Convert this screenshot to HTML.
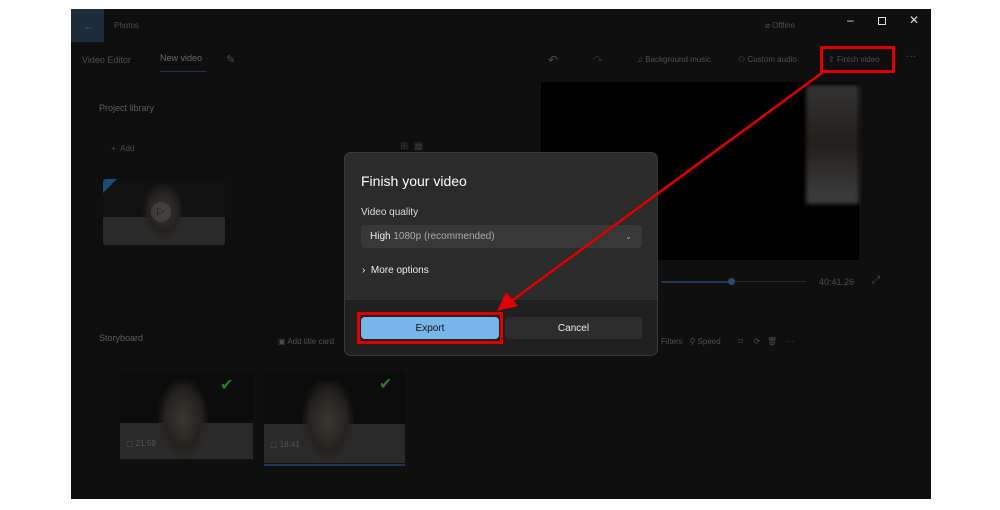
<!DOCTYPE html>
<html><head><meta charset="utf-8"><style>
*{margin:0;padding:0;box-sizing:border-box}
body{width:1000px;height:510px;background:#fff;position:relative;overflow:hidden;font-family:"Liberation Sans",sans-serif}
.win{position:absolute;left:71px;top:9px;width:860px;height:490px;background:#0f0f0f;overflow:hidden}
.a{position:absolute;color:#4e4e4e;font-size:9px;white-space:nowrap}
.dlg{position:absolute;left:344px;top:152px;width:314px;height:204px;background:#2b2b2b;border-radius:7px;overflow:hidden;border:1px solid #3a3a3a}
.face{position:absolute;border-radius:40%;background:radial-gradient(ellipse at center,#3a3632 0%,#26231f 50%,rgba(30,30,30,0) 75%)}
</style></head><body>
<div class="win">
 <div style="position:absolute;left:0;top:0;width:33px;height:33px;background:#1c2c3a"></div>
 <div class="a" style="left:12px;top:10px;font-size:12px;color:#3d5a74">←</div>
 <div class="a" style="left:43px;top:12px;font-size:8px">Photos</div>
 <div class="a" style="left:694px;top:12px;font-size:8px">⌀ Offline</div>
 <div class="a" style="left:776px;top:4px;font-size:12px;color:#ddd">–</div>
 <div style="position:absolute;left:807px;top:8px;width:8px;height:8px;border:1px solid #ddd"></div>
 <div class="a" style="left:838px;top:4px;font-size:12px;color:#ddd">✕</div>
 <div class="a" style="left:11px;top:46px">Video Editor</div>
 <div class="a" style="left:89px;top:44px;color:#6a6a6a">New video</div>
 <div style="position:absolute;left:89px;top:62px;width:47px;height:1px;background:#1d3550"></div>
 <div class="a" style="left:155px;top:44px;font-size:11px">✎</div>
 <div class="a" style="left:477px;top:44px;font-size:12px">↶</div>
 <div class="a" style="left:522px;top:44px;font-size:12px;color:#2a2a2a">↷</div>
 <div class="a" style="left:566px;top:46px;font-size:8px">♫ Background music</div>
 <div class="a" style="left:667px;top:46px;font-size:8px">⚇ Custom audio</div>
 <div class="a" style="left:757px;top:46px;font-size:8px">⇪ Finish video</div>
 <div class="a" style="left:835px;top:42px;font-size:10px">···</div>
 <div class="a" style="left:28px;top:94px;font-size:9px;color:#5e5e5e">Project library</div>
 <div class="a" style="left:40px;top:135px;font-size:8px">+ &nbsp;Add</div>
 <div class="a" style="left:329px;top:132px;font-size:10px;color:#3a3a3a">⊞ &nbsp;▦</div>
 <div style="position:absolute;left:32px;top:170px;width:122px;height:66px;background:#111;overflow:hidden;border-radius:3px">
  <div style="position:absolute;left:0;top:38px;width:122px;height:28px;background:#2a2a2a"></div>
  <div class="face" style="left:40px;top:5px;width:40px;height:55px"></div>
  <div style="position:absolute;left:0;top:0;width:0;height:0;border-top:14px solid #1f4a75;border-right:14px solid transparent"></div>
  <div style="position:absolute;left:48px;top:23px;width:20px;height:20px;border-radius:50%;background:rgba(80,80,80,.5);color:#1a1a1a;font-size:10px;text-align:center;line-height:20px">▷</div>
 </div>
 <div style="position:absolute;left:470px;top:73px;width:318px;height:178px;background:#000"></div>
 <div style="position:absolute;left:735px;top:76px;width:53px;height:119px;background:linear-gradient(#333,#241f1b 50%,#3a3a3a 90%);filter:blur(2px)"></div>
 <div style="position:absolute;left:590px;top:272px;width:71px;height:2px;background:#1d3550"></div>
 <div style="position:absolute;left:661px;top:272px;width:74px;height:1px;background:#2a2a2a"></div>
 <div style="position:absolute;left:657px;top:269px;width:7px;height:7px;border-radius:50%;background:#2a4a6a"></div>
 <div class="a" style="left:748px;top:268px;font-size:9px">40:41.26</div>
 <div class="a" style="left:801px;top:266px;font-size:10px">⤢</div>
 <div class="a" style="left:28px;top:324px;font-size:9px;color:#5e5e5e">Storyboard</div>
 <div class="a" style="left:207px;top:328px;font-size:8px">▣ Add title card</div>
 <div class="a" style="left:590px;top:328px;font-size:8px">Filters &nbsp; ⚲ Speed &nbsp;&nbsp;&nbsp;&nbsp;&nbsp;&nbsp; ⌑ &nbsp;&nbsp;&nbsp; ⟳ &nbsp; 🗑 &nbsp;&nbsp; ···</div>
 <div style="position:absolute;left:49px;top:364px;width:133px;height:86px;background:#0c0c0c;overflow:hidden">
  <div style="position:absolute;left:0;top:50px;width:133px;height:36px;background:#2a2a2a"></div>
  <div class="face" style="left:38px;top:6px;width:50px;height:80px"></div>
  <div class="a" style="left:100px;top:2px;font-size:16px;color:#2f7a28">✔</div>
  <div class="a" style="left:6px;top:66px;font-size:8px;color:#555">▢ 21:59</div>
 </div>
 <div style="position:absolute;left:193px;top:363px;width:141px;height:91px;background:#0c0c0c;overflow:hidden">
  <div style="position:absolute;left:0;top:52px;width:141px;height:39px;background:#2a2a2a"></div>
  <div class="face" style="left:38px;top:8px;width:52px;height:83px"></div>
  <div class="a" style="left:115px;top:2px;font-size:16px;color:#2f7a28">✔</div>
  <div class="a" style="left:6px;top:68px;font-size:8px;color:#555">▢ 18:41</div>
 </div>
 <div style="position:absolute;left:193px;top:455px;width:141px;height:2px;background:#1d3550"></div>
</div>
<div class="dlg">
 <div style="position:absolute;left:16px;top:20px;font-size:14px;color:#fff">Finish your video</div>
 <div style="position:absolute;left:16px;top:54px;font-size:10px;color:#ddd">Video quality</div>
 <div style="position:absolute;left:16px;top:72px;width:281px;height:23px;background:#383838;border-radius:4px;font-size:10px;color:#aaa;line-height:23px;padding-left:9px"><b style="color:#eee;font-weight:normal">High</b> 1080p (recommended)<span style="position:absolute;right:10px;top:0;font-size:8px">⌄</span></div>
 <div style="position:absolute;left:17px;top:112px;font-size:10px;color:#eee">›&nbsp; More options</div>
 <div style="position:absolute;left:0;top:146px;width:314px;height:58px;background:#202020;border-top:1px solid #2e2e2e"></div>
 <div style="position:absolute;left:160px;top:164px;width:137px;height:22px;background:#2d2d2d;border-radius:4px;color:#eee;font-size:10px;text-align:center;line-height:24px">Cancel</div>
</div>
<div style="position:absolute;left:357px;top:312px;width:146px;height:32px;border:3px solid #e00000"></div>
<div style="position:absolute;left:361px;top:317px;width:138px;height:22px;background:#78b6e9;border-radius:4px;color:#111;font-size:10px;text-align:center;line-height:24px">Export</div>
<div style="position:absolute;left:820px;top:46px;width:75px;height:27px;border:3px solid #e00000"></div>
<svg style="position:absolute;left:0;top:0" width="1000" height="510"><line x1="826" y1="70" x2="510" y2="302" stroke="#e00000" stroke-width="2.5"/><polygon points="497,311 506,292 518,306" fill="#e00000"/></svg>
</body></html>
